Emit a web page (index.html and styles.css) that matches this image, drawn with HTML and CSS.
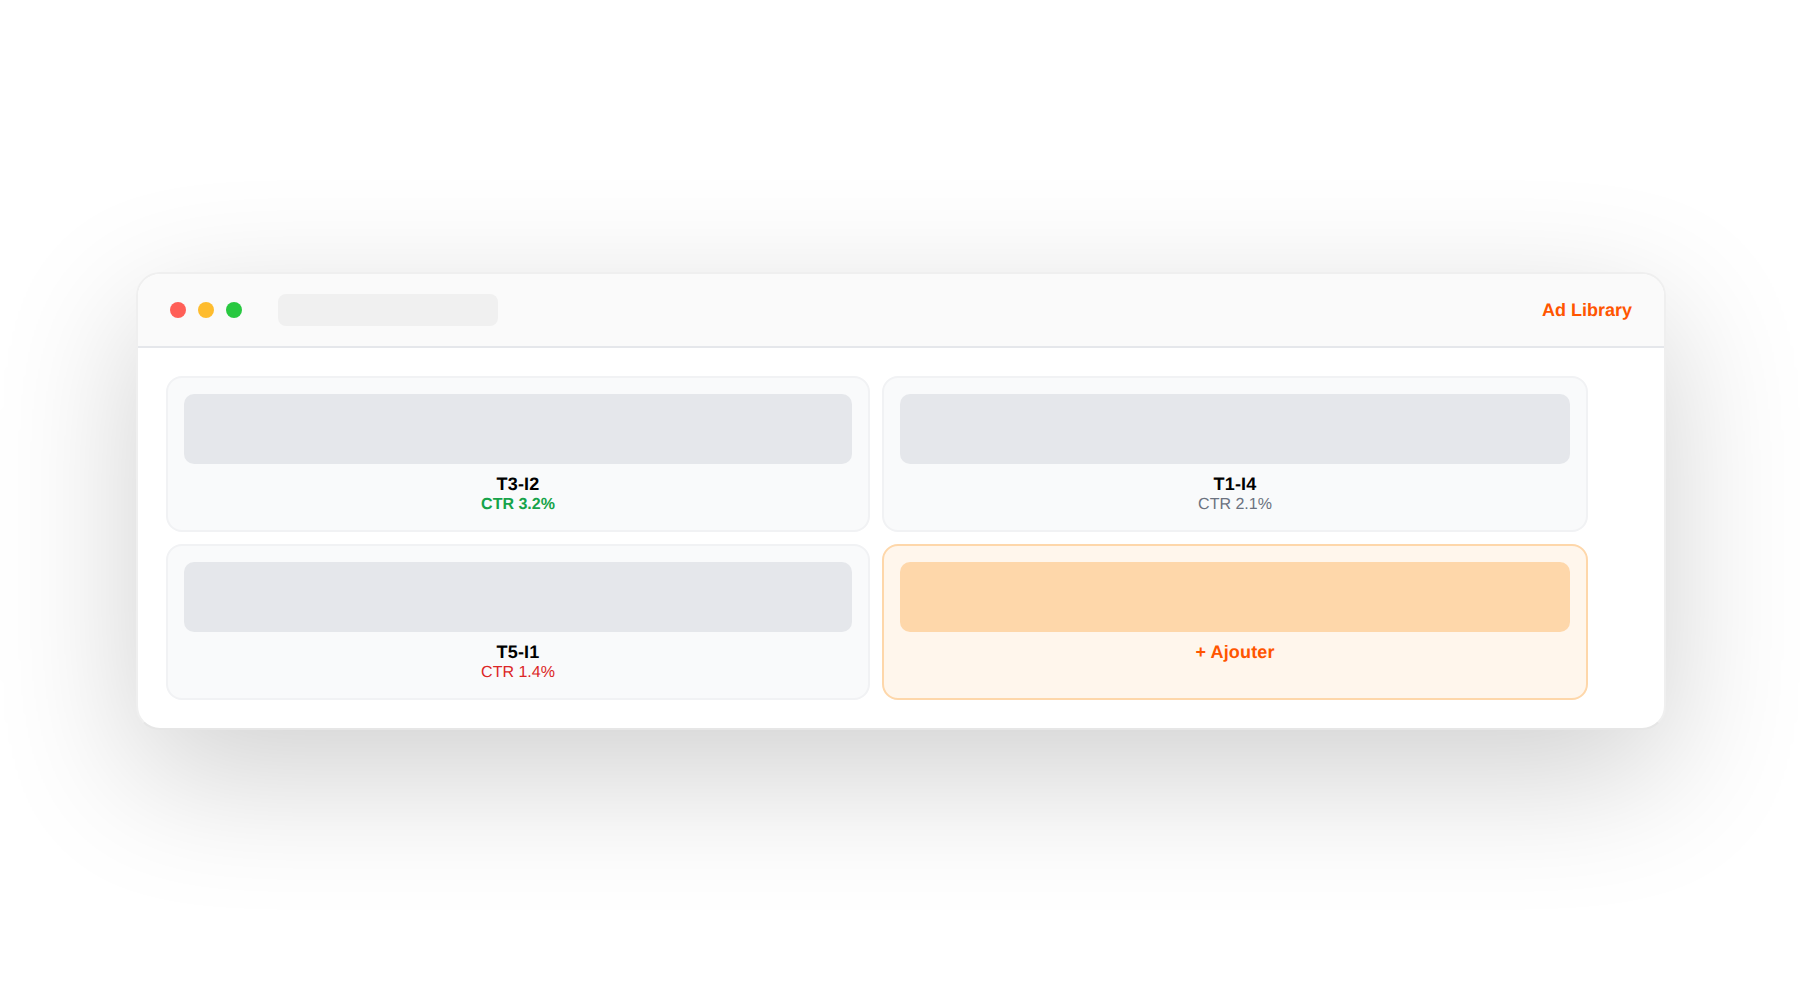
FILE: index.html

```html
<!DOCTYPE html>
<html lang="fr">
<head>
    <meta charset="UTF-8">
    <meta name="viewport" content="width=device-width, initial-scale=1.0">
    <title>Ad Library</title>
    <link rel="stylesheet" href="styles.css">
</head>
<body>
    <div class="window">
        <div class="titlebar">
            <div class="dots">
                <span class="dot red"></span>
                <span class="dot yellow"></span>
                <span class="dot green"></span>
            </div>
            <div class="urlbar"></div>
            <div class="brand">Ad Library</div>
        </div>
        <div class="grid">
            <div class="card">
                <div class="thumb"></div>
                <div class="name">T3-I2</div>
                <div class="ctr good">CTR 3.2%</div>
            </div>
            <div class="card">
                <div class="thumb"></div>
                <div class="name">T1-I4</div>
                <div class="ctr">CTR 2.1%</div>
            </div>
            <div class="card">
                <div class="thumb"></div>
                <div class="name">T5-I1</div>
                <div class="ctr bad">CTR 1.4%</div>
            </div>
            <div class="card add">
                <div class="thumb"></div>
                <div class="name">+ Ajouter</div>
            </div>
        </div>
    </div>
</body>
</html>
```

FILE: styles.css

```css
* {
    box-sizing: border-box;
}
body {
    margin: 0;
    height: 100vh;
    padding: 2px 0 0 2px;
    display: flex;
    justify-content: center;
    align-items: center;
    background: #ffffff;
    font-family: "Liberation Sans", Arial, sans-serif;
    text-rendering: geometricPrecision;
    overflow: hidden;
}
.window {
    width: 1530px;
    background: #ffffff;
    border: 2px solid #efefef;
    border-bottom-color: #e6e6e6;
    border-radius: 24px;
    box-shadow: 0 44px 140px rgba(0, 0, 0, 0.19);
    overflow: hidden;
}
.titlebar {
    height: 74px;
    display: flex;
    align-items: center;
    padding: 0 32px;
    background: #fafafa;
    border-bottom: 2px solid #e5e7eb;
}
.dots {
    display: flex;
    gap: 12px;
}
.dot {
    width: 16px;
    height: 16px;
    border-radius: 50%;
}
.red { background: #ff5f57; }
.yellow { background: #febc2e; }
.green { background: #28c840; }
.urlbar {
    width: 220px;
    height: 32px;
    margin-left: 36px;
    background: #f0f0f0;
    border-radius: 8px;
}
.brand {
    margin-left: auto;
    font-size: 18px;
    font-weight: 700;
    color: #ff5500;
}
.grid {
    display: grid;
    grid-template-columns: 704px 706px;
    gap: 12px;
    padding: 28px;
}
.card {
    height: 156px;
    padding: 16px;
    background: #f9fafb;
    border: 2px solid #f1f2f4;
    border-radius: 16px;
    text-align: center;
}
.thumb {
    height: 70px;
    margin-bottom: 10px;
    background: #e5e7eb;
    border-radius: 10px;
}
.name {
    font-size: 18px;
    line-height: 21px;
    font-weight: 700;
    letter-spacing: 0.15px;
    color: #000000;
}
.ctr {
    font-size: 16px;
    line-height: 20px;
    color: #6b7280;
}
.good { color: #16a34a; font-weight: 700; }
.bad { color: #dc2626; }
.add {
    background: #fff6ec;
    border-color: #fed7aa;
}
.add .thumb { background: #fed7aa; }
.add .name { color: #ff5500; }
```
